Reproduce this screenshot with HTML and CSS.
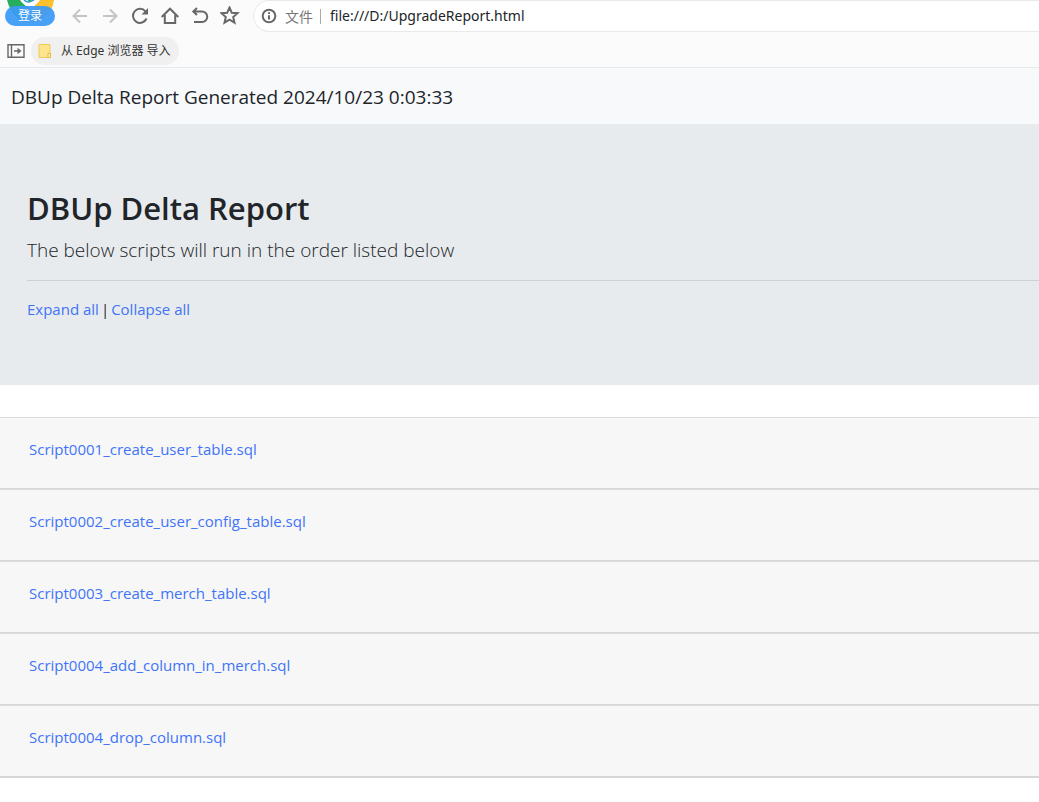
FILE: index.html
```html
<!DOCTYPE html>
<html lang="zh-CN">
<head>
<meta charset="utf-8">
<meta name="viewport" content="width=device-width, initial-scale=1">
<title>DBUp Delta Report</title>
<link rel="stylesheet" href="styles.css">
</head>
<body>
<header class="browser">
  <div class="toolbar">
    <div class="account">
      <svg class="avatar" viewBox="0 0 50 26" aria-hidden="true">
        <circle cx="25" cy="-1" r="24" fill="#fff"/>
        <path d="M2 0H17Q19 6 24 8L22 23Q7 19 2 0Z" fill="#27ae5c"/>
        <path d="M33 0H49Q47 17 27 23L24 16Z" fill="#fbc02d"/>
        <circle cx="25" cy="-5" r="11" fill="#fff"/>
        <path d="M19 0Q21 2 24 2L29 0" fill="none" stroke="#2f9be6" stroke-width="1.500"/>
        <path d="M23 0L26 1" stroke="#27ae5c" stroke-width="2"/>
      </svg>
      <button class="login" type="button">登录</button>
    </div>
    <nav class="controls" aria-label="浏览器导航">
      <button class="tool faint" type="button" aria-label="后退"><svg viewBox="0 0 20 20"><path d="M17 10H4M10 3.500L3.500 10L10 16.500"/></svg></button>
      <button class="tool faint" type="button" aria-label="前进"><svg viewBox="0 0 20 20"><path d="M3 10H16M10 3.500L16.500 10L10 16.500"/></svg></button>
      <button class="tool" type="button" aria-label="刷新"><svg viewBox="0 0 20 20"><path d="M16.500 12.500A7 7 0 1 1 15.500 5.500"/><path class="solid" d="M18 2V8.500H11.500Z"/></svg></button>
      <button class="tool" type="button" aria-label="主页"><svg viewBox="0 0 20 20"><path d="M1.700 11L10 2.700L18.300 11M4.800 9V17H15.200V9"/></svg></button>
      <button class="tool" type="button" aria-label="恢复"><svg viewBox="0 0 20 20"><path d="M7 2L3.300 5.500L7 9M3.500 5.500H12A5.200 5.200 0 0 1 12 16H4"/></svg></button>
      <button class="tool" type="button" aria-label="收藏"><svg viewBox="0 0 20 20"><path d="M9.500 1.500L11.800 6.800L17.500 7.200L13.200 11L14.500 16.700L9.500 13.700L4.500 16.700L5.800 11L1.500 7.200L7.200 6.800Z"/></svg></button>
    </nav>
    <div class="address">
      <svg class="info" viewBox="0 0 16 16" aria-hidden="true"><circle cx="8" cy="8" r="6.300"/><path d="M8 7.200V11.500M8 4.300V6"/></svg>
      <label class="scheme" for="url">文件</label>
      <input class="url" id="url" type="text" value="file:///D:/UpgradeReport.html">
    </div>
  </div>
  <div class="bookmarks">
    <button class="side" type="button" aria-label="侧边栏"><svg viewBox="0 0 18 14"><path d="M1 .7H17V13.300H1ZM4.500 1V13M7 7H12"/><path class="solid" d="M10.500 3.800L14.500 7L10.500 10.200Z"/></svg></button>
    <button class="import" type="button">
      <svg viewBox="0 0 14 16" aria-hidden="true"><path d="M1 1.500H12V14.500H1Z" fill="#fde48d" stroke="#efcc5a"/><path d="M10 10.500H12.500V14.500H10Z" fill="#fff0b5" stroke="#e5bd42"/></svg>
      <span>从 Edge 浏览器 导入</span>
    </button>
  </div>
</header>
<div class="navbar">DBUp Delta Report Generated 2024/10/23 0:03:33</div>
<main>
  <section class="jumbotron">
    <h1>DBUp Delta Report</h1>
    <p class="lead">The below scripts will run in the order listed below</p>
    <hr>
    <p class="actions"><a href="#scripts">Expand all</a><span>|</span><a href="#scripts">Collapse all</a></p>
  </section>
  <section class="scripts" id="scripts">
    <div class="card"><a href="#s1">Script0001_create_user_table.sql</a></div>
    <div class="card"><a href="#s2">Script0002_create_user_config_table.sql</a></div>
    <div class="card"><a href="#s3">Script0003_create_merch_table.sql</a></div>
    <div class="card"><a href="#s4">Script0004_add_column_in_merch.sql</a></div>
    <div class="card"><a href="#s5">Script0004_drop_column.sql</a></div>
  </section>
</main>
</body>
</html>
```
FILE: styles.css
```css
* { box-sizing: border-box; }
body {
  margin: 0;
  background: #fff;
  color: #212529;
  font: 15px/24px "Open Sans", "Noto Sans CJK SC", sans-serif;
}
button, input {
  margin: 0;
  padding: 0;
  border: 0;
  background: none;
  color: inherit;
  font: inherit;
}
svg { display: block; flex: none; }
a { color: #3f74f8; text-decoration: none; }

.browser {
  background: #fbfbfb;
  border-bottom: 1px solid #e8e9ea;
  font-family: "Noto Sans", "Noto Sans CJK SC", sans-serif;
}
.toolbar { display: flex; height: 32px; }
.account {
  position: relative;
  flex: none;
  width: 50px;
  height: 26px;
  margin: 0 15px 0 5px;
}
.avatar { width: 50px; height: 26px; }
.login {
  position: absolute;
  left: 0;
  bottom: 0;
  width: 50px;
  height: 20px;
  border-radius: 10px;
  background: #3d9af6f0;
  color: #fff;
  font-size: 12px;
  line-height: 20px;
}
.controls { display: flex; flex: none; gap: 10px; margin-right: 13px; align-items: center; }
.tool, .tool svg { width: 20px; height: 20px; }
.tool svg, .side svg, .info {
  fill: none;
  stroke: #686868;
  stroke-width: 2;
}
.faint svg { stroke: #c4c4c4; }
.tool .solid, .side .solid { fill: #686868; stroke: none; }
.address {
  display: flex;
  flex: 1;
  align-items: center;
  min-width: 0;
  padding-left: 7px;
  border: 1px solid #e9e9e9;
  border-right: 0;
  border-radius: 16px 0 0 16px;
  background: #fff;
}
.info { width: 16px; height: 16px; margin-right: 8px; }
.scheme {
  flex: none;
  padding-right: 7px;
  border-right: 1px solid #aaa;
  color: #777;
  font-size: 14px;
  line-height: 15px;
}
.url {
  flex: 1;
  min-width: 0;
  padding-left: 9px;
  font-size: 14px;
  outline: 0;
}
.bookmarks { display: flex; align-items: center; height: 35px; gap: 6px; padding: 5px 7px 2px; }
.side svg { width: 18px; height: 14px; stroke-width: 1.4; }
.import {
  display: flex;
  align-items: center;
  gap: 9px;
  height: 28px;
  padding: 0 8px 0 7px;
  border-radius: 14px;
  background: #f0f0f0;
  color: #333;
  font-size: 12px;
}
.import svg { width: 14px; height: 16px; }

.navbar {
  padding: 14px 11px 12px;
  background: #f8f9fb;
  font-size: 19px;
  line-height: 30px;
}
.jumbotron {
  margin-bottom: 32px;
  padding: 65px 0 64px 27px;
  background: #e8ebee;
}
h1 { margin: 0 0 7px; font-size: 31px; line-height: 39px; font-weight: 600; }
.lead { margin: 0 0 15px; font-size: 19px; line-height: 30px; font-weight: 300; }
hr { margin: 0 0 16px; border: 0; border-top: 1px solid #cdd1d4; }
.actions { display: flex; gap: 2px; margin: 0; }
.card {
  min-height: 72px;
  padding: 19px 29px;
  border-top: 1px solid #dcdcdc;
  border-bottom: 1px solid #d6d6d6;
  background: #f7f7f7;
}
.card:last-child { min-height: 73px; border-bottom-width: 2px; }
```
